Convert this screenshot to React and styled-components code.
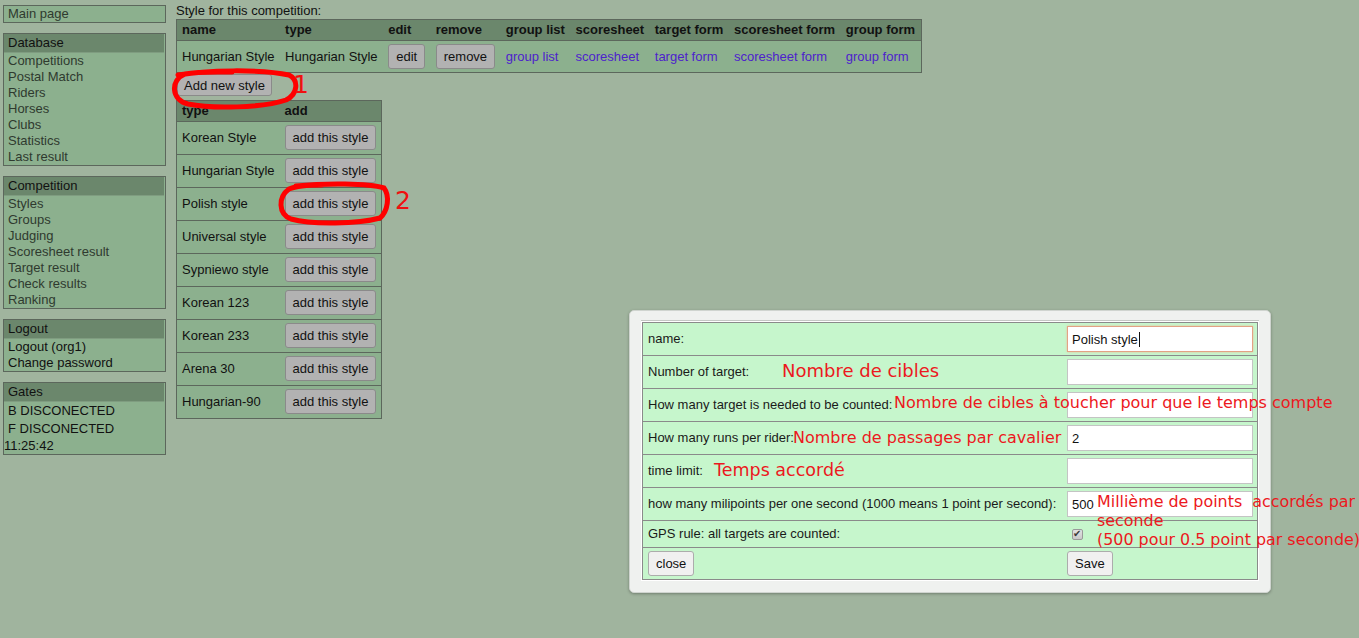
import React from 'react';
import styled, { createGlobalStyle } from 'styled-components';

const Global = createGlobalStyle`
  html, body { margin: 0; padding: 0; }
  body {
    background: #a0b49e;
    font-family: "Liberation Sans", Arial, sans-serif;
    font-size: 13px;
    color: #111;
  }
`;

const Page = styled.div`
  position: relative;
  min-height: 638px;
  display: flex;
  align-items: flex-start;
  gap: 10px;
  padding: 3px 0 0 3px;
  box-sizing: border-box;
`;

const Sidebar = styled.nav`
  width: 163px;
  margin-top: 2px;
  display: flex;
  flex-direction: column;
  gap: 10px;
`;

const Box = styled.div`
  background: #8cb08e;
  border: 1px solid #5c675c;
  display: flex;
  flex-direction: column;
`;

const BoxHeader = styled.div`
  background: #6b876c;
  color: #111;
  height: 18px;
  line-height: 18px;
  padding-left: 4px;
  margin-right: 1px;
  border-bottom: 1px solid #7f9c80;
`;

const NavLink = styled.a`
  color: ${p => (p.$dark ? '#111' : '#2f3a2f')};
  text-decoration: none;
  line-height: 16px;
  padding-left: 4px;
`;

const GateLine = styled.div`
  color: #111;
  line-height: ${p => p.$lh}px;
  padding-left: ${p => p.$pl}px;
`;

const Main = styled.main`
  display: flex;
  flex-direction: column;
  align-items: flex-start;
`;

const Caption = styled.div`
  line-height: 16px;
  color: #111;
`;

const Table = styled.table`
  border-collapse: separate;
  border-spacing: 0;
  border: 1px solid #5c675c;
  background: #8cb08e;
`;

const Th = styled.th`
  background: #6b876c;
  text-align: left;
  font-weight: bold;
  padding: 2px ${p => p.$pr || 5}px 2px 5px;
  line-height: 16px;
  white-space: nowrap;
  border-bottom: 1px solid #5c675c;
`;

const Td = styled.td`
  padding: ${p => p.$pad || '3px 5.6px 3px 5px'};
  line-height: 16px;
  white-space: nowrap;
  vertical-align: middle;
  border-bottom: ${p => (p.$last ? 'none' : '1px solid #5c675c')};
`;

const Link = styled.a`
  color: #4c22cc;
  text-decoration: none;
`;

const GreyButton = styled.button`
  font-family: "Liberation Sans", Arial, sans-serif;
  font-size: 13px;
  color: #111;
  background: #b2b2b2;
  border: 1px solid #8a8a8a;
  border-radius: 3px;
  height: ${p => p.$h || 25}px;
  padding: 0 ${p => p.$px || 7}px;
  margin: ${p => p.$m || 0};
  display: block;
`;

const Dialog = styled.div`
  position: absolute;
  left: 629px;
  top: 310px;
  background: #eff1ef;
  border: 1px solid #cfd4cf;
  border-radius: 5px;
  box-shadow: 0 1px 3px rgba(0, 0, 0, 0.3);
  padding: 9px 11px 11px 11px;
`;

const DialogContent = styled.div`
  background: #fff;
  border-top: 1px solid #c4c8c4;
  padding: 1px;
`;

const FormTable = styled.table`
  width: 616px;
  border-collapse: separate;
  border-spacing: 0;
  border: 1px solid #8a8a8a;
  background: #c6f6cc;
  color: #1a1a1a;
`;

const Label = styled.td`
  position: relative;
  padding: ${p => p.$pad || '3px 5px'};
  white-space: nowrap;
  line-height: 16px;
  vertical-align: middle;
  border-bottom: ${p => (p.$last ? 'none' : '1px solid #8a8a8a')};
`;

const Field = styled.td`
  width: 186px;
  padding: ${p => p.$pad || '3px 4px 3px 5px'};
  vertical-align: middle;
  border-bottom: ${p => (p.$last ? 'none' : '1px solid #8a8a8a')};
`;

const InputWrap = styled.div`
  position: relative;
`;

const Input = styled.input`
  display: block;
  box-sizing: border-box;
  width: 186px;
  height: 26px;
  padding: 0 4px;
  font-family: "Liberation Sans", Arial, sans-serif;
  font-size: 13px;
  color: #111;
  background: #fff;
  border: 1px solid ${p => (p.$focus ? '#e3a284' : '#c4c4c4')};
  box-shadow: ${p => (p.$focus ? '0 0 2px #efb99c' : 'none')};
  outline: none;
  margin: 0;
`;

const Caret = styled.span`
  position: absolute;
  left: ${p => p.$left}px;
  top: 6px;
  width: 1px;
  height: 15px;
  background: #111;
`;

const Check = styled.input`
  appearance: none;
  -webkit-appearance: none;
  position: relative;
  margin: 3px 3px 3px 5px;
  width: 11px;
  height: 11px;
  box-sizing: border-box;
  display: block;
  border: 1px solid #9a9a9a;
  border-radius: 2px;
  background: linear-gradient(#e2e2e2, #c9c9c9);

  &::after {
    content: "✔";
    position: absolute;
    left: 0px;
    top: -2px;
    font-size: 10px;
    line-height: 12px;
    color: #3a3a3a;
    font-family: "DejaVu Sans", sans-serif;
  }
`;

const LightButton = styled.button`
  font-family: "Liberation Sans", Arial, sans-serif;
  font-size: 13px;
  color: #111;
  background: #f0f0f0;
  border: 1px solid #acacac;
  border-radius: 3px;
  height: 25px;
  padding: 0 7px;
  display: block;
`;

const Annot = styled.span`
  position: absolute;
  left: ${p => p.$left}px;
  top: ${p => p.$top}px;
  font-family: "DejaVu Sans", Verdana, sans-serif;
  font-size: ${p => p.$size}px;
  line-height: ${p => p.$lh}px;
  color: #ec1820;
  white-space: pre;
  pointer-events: none;
  z-index: 2;
`;

const Mark = styled.span`
  position: absolute;
  left: ${p => p.$left}px;
  top: ${p => p.$top}px;
  font-family: "DejaVu Sans", Verdana, sans-serif;
  font-size: 25px;
  line-height: 30px;
  color: #f01010;
  z-index: 3;
`;

const Scribble = styled.svg`
  position: absolute;
  left: 0;
  top: 0;
  width: 1359px;
  height: 638px;
  pointer-events: none;
  z-index: 3;
`;

const dbLinks = ['Competitions', 'Postal Match', 'Riders', 'Horses', 'Clubs', 'Statistics', 'Last result'];
const compLinks = ['Styles', 'Groups', 'Judging', 'Scoresheet result', 'Target result', 'Check results', 'Ranking'];
const styleTypes = ['Korean Style', 'Hungarian Style', 'Polish style', 'Universal style', 'Sypniewo style', 'Korean 123', 'Korean 233', 'Arena 30', 'Hungarian-90'];
const cols = ['name', 'type', 'edit', 'remove', 'group list', 'scoresheet', 'target form', 'scoresheet form', 'group form'];

export default function App() {
  return (
    <>
      <Global />
      <Page>
        <Sidebar>
          <Box>
            <NavLink href="#">Main page</NavLink>
          </Box>
          <Box>
            <BoxHeader>Database</BoxHeader>
            {dbLinks.map(l => (
              <NavLink key={l} href="#">{l}</NavLink>
            ))}
          </Box>
          <Box>
            <BoxHeader>Competition</BoxHeader>
            {compLinks.map(l => (
              <NavLink key={l} href="#">{l}</NavLink>
            ))}
          </Box>
          <Box>
            <BoxHeader>Logout</BoxHeader>
            <NavLink href="#" $dark>Logout (org1)</NavLink>
            <NavLink href="#" $dark>Change password</NavLink>
          </Box>
          <Box>
            <BoxHeader>Gates</BoxHeader>
            <GateLine $lh={18} $pl={4}>B DISCONECTED</GateLine>
            <GateLine $lh={18} $pl={4}>F DISCONECTED</GateLine>
            <GateLine $lh={16} $pl={0}>11:25:42</GateLine>
          </Box>
        </Sidebar>

        <Main>
          <Caption>Style for this competition:</Caption>
          <Table>
            <thead>
              <tr>
                {cols.map(c => (
                  <Th key={c} $pr={5.6}>{c}</Th>
                ))}
              </tr>
            </thead>
            <tbody>
              <tr>
                <Td $last>Hungarian Style</Td>
                <Td $last>Hungarian Style</Td>
                <Td $last><GreyButton>edit</GreyButton></Td>
                <Td $last><GreyButton>remove</GreyButton></Td>
                <Td $last><Link href="#">group list</Link></Td>
                <Td $last><Link href="#">scoresheet</Link></Td>
                <Td $last><Link href="#">target form</Link></Td>
                <Td $last><Link href="#">scoresheet form</Link></Td>
                <Td $last><Link href="#">group form</Link></Td>
              </tr>
            </tbody>
          </Table>
          <GreyButton $h={22} $px={6} $m="1px 0 4px 1px">Add new style</GreyButton>
          <Table>
            <thead>
              <tr>
                <Th>type</Th>
                <Th>add</Th>
              </tr>
            </thead>
            <tbody>
              {styleTypes.map((t, i) => (
                <tr key={t}>
                  <Td $pad="3px 5px 4px 5px" $last={i === styleTypes.length - 1}>{t}</Td>
                  <Td $pad="3px 5px 4px 5px" $last={i === styleTypes.length - 1}>
                    <GreyButton>add this style</GreyButton>
                  </Td>
                </tr>
              ))}
            </tbody>
          </Table>
        </Main>

        <Scribble viewBox="0 0 1359 638">
          <path
            d="M 178 75 C 205 70, 262 69, 289 75 C 299 80, 298 94, 286 100 C 262 108, 212 109, 188 104 C 171 100, 170 80, 185 74 C 200 71, 220 72, 232 72"
            fill="none"
            stroke="#ff0000"
            strokeWidth="5"
            strokeLinecap="round"
          />
          <path
            d="M 296 186 C 325 183, 368 183, 384 188 C 390 196, 388 211, 380 218 C 358 224, 312 225, 291 219 C 278 214, 278 197, 289 189 C 296 186, 310 185, 322 185"
            fill="none"
            stroke="#ff0000"
            strokeWidth="5"
            strokeLinecap="round"
          />
        </Scribble>
        <Mark $left={293} $top={70}>1</Mark>
        <Mark $left={395} $top={186}>2</Mark>

        <Dialog>
          <DialogContent>
            <FormTable>
              <tbody>
                <tr>
                  <Label>name:</Label>
                  <Field>
                    <InputWrap>
                      <Input $focus defaultValue="Polish style" />
                      <Caret $left={72} />
                    </InputWrap>
                  </Field>
                </tr>
                <tr>
                  <Label>
                    Number of target:
                    <Annot $left={139} $top={5} $size={18} $lh={20}>Nombre de cibles</Annot>
                  </Label>
                  <Field><Input defaultValue="" /></Field>
                </tr>
                <tr>
                  <Label>
                    How many target is needed to be counted:
                    <Annot $left={251} $top={4} $size={16} $lh={19}>Nombre de cibles à toucher pour que le temps compte</Annot>
                  </Label>
                  <Field><Input defaultValue="" /></Field>
                </tr>
                <tr>
                  <Label>
                    How many runs per rider:
                    <Annot $left={150} $top={6} $size={16} $lh={19}>Nombre de passages par cavalier</Annot>
                  </Label>
                  <Field><Input defaultValue="2" /></Field>
                </tr>
                <tr>
                  <Label>
                    time limit:
                    <Annot $left={71} $top={5} $size={17.5} $lh={20}>Temps accordé</Annot>
                  </Label>
                  <Field><Input defaultValue="" /></Field>
                </tr>
                <tr>
                  <Label>
                    how many milipoints per one second (1000 means 1 point per second):
                    <Annot $left={454} $top={4} $size={15.9} $lh={19}>{'Millième de points  accordés par\nseconde\n(500 pour 0.5 point par seconde)'}</Annot>
                  </Label>
                  <Field><Input defaultValue="500" /></Field>
                </tr>
                <tr>
                  <Label $pad="5px 5px">GPS rule: all targets are counted:</Label>
                  <Field $pad="2px 4px 2px 5px"><Check type="checkbox" defaultChecked disabled /></Field>
                </tr>
                <tr>
                  <Label $last><LightButton>close</LightButton></Label>
                  <Field $last><LightButton>Save</LightButton></Field>
                </tr>
              </tbody>
            </FormTable>
          </DialogContent>
        </Dialog>
      </Page>
    </>
  );
}
